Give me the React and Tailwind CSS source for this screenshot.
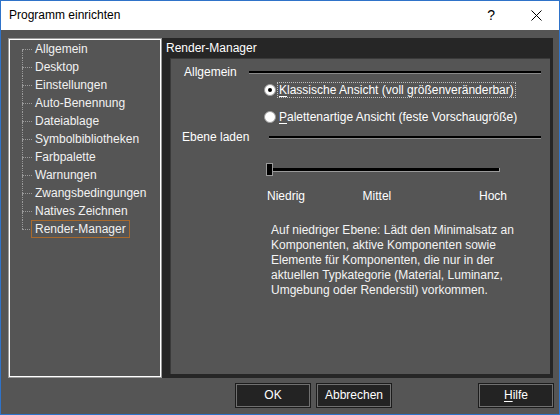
import React from "react";

const items = [
  "Allgemein",
  "Desktop",
  "Einstellungen",
  "Auto-Benennung",
  "Dateiablage",
  "Symbolbibliotheken",
  "Farbpalette",
  "Warnungen",
  "Zwangsbedingungen",
  "Natives Zeichnen",
  "Render-Manager",
];

const dots = "border-dotted border-[#9a9a9a]";

function TreeRow({ label, first, last, selected }) {
  return (
    <div className="flex h-[18px] items-stretch">
      <div className="flex w-[10px] flex-col">
        <div className={first ? "flex-1" : `flex-1 border-l ${dots}`} />
        <div className={`h-px border-t ${dots}`} />
        <div className={last ? "flex-1" : `flex-1 border-l ${dots}`} />
      </div>
      <div className="flex items-center">
        <span
          className={
            selected
              ? "ml-[-1px] flex h-[18px] items-center border border-[#a8692c] px-[3px]"
              : "ml-[2px] px-px"
          }
        >
          {label}
        </span>
      </div>
    </div>
  );
}

function Radio({ checked, accel, rest, focused }) {
  return (
    <div className="flex h-[16px] items-center">
      <span className="flex h-[12px] w-[12px] items-center justify-center rounded-full border border-[#9c9c9c] bg-white">
        {checked && <span className="h-[4px] w-[4px] rounded-full bg-black" />}
      </span>
      <span
        className={
          focused
            ? "ml-px flex h-[16px] items-center border border-dotted border-[#bdbdbd] px-px"
            : "ml-px flex h-[16px] items-center border border-transparent px-px"
        }
      >
        <span className="underline underline-offset-2">{accel}</span>
        {rest}
      </span>
    </div>
  );
}

function Rule() {
  return <div className="h-[3px] flex-1 border-b border-[#8a8a8a] bg-black" />;
}

function Button({ children, className = "" }) {
  return (
    <button
      className={`flex h-[23px] w-[74px] items-center justify-center border border-[#707070] bg-[#232323] text-white shadow-[0_0_0_1px_#1c1c1c] ${className}`}
    >
      {children}
    </button>
  );
}

export default function App() {
  return (
    <div className="flex h-[415px] w-[560px] flex-col border border-[#2f73c9] font-['Liberation_Sans',Arial,sans-serif] text-[12px] leading-[15px]">
      {/* title bar */}
      <div className="flex h-[29px] items-center bg-white pl-2 text-black">
        <span>Programm einrichten</span>
        <span className="ml-auto mr-[36px] text-[14px]">?</span>
        <svg width="11" height="11" viewBox="0 0 11 11" className="mr-[17px]">
          <path d="M0.5 0.5 L10.5 10.5 M10.5 0.5 L0.5 10.5" stroke="#000" strokeWidth="1" />
        </svg>
      </div>

      <div className="flex flex-1 flex-col bg-[#555555] pl-[7px] pr-[6px] pt-[8px] pb-[7px]">
        <div className="flex h-[340px]">
          {/* tree */}
          <div className="w-[154px] border border-[#9a9a9a]">
            <div className="h-full border border-white bg-[#555555] pl-[12px] text-[#f2f2f2]">
              {items.map((it, i) => (
                <TreeRow
                  key={it}
                  label={it}
                  first={i === 0}
                  last={i === items.length - 1}
                  selected={i === items.length - 1}
                />
              ))}
            </div>
          </div>

          {/* page */}
          <div className="flex flex-1 flex-col bg-[#262626] pb-[4px] pl-[8px] pr-[3px]">
            <div className="flex h-[20px] items-center pl-[-4px] text-white">
              <span className="ml-[-4px]">Render-Manager</span>
            </div>
            <div className="flex-1 border-l border-t border-[#3a3a3a] bg-[#555555] pr-[9px] text-white">
              <div className="ml-[13px] mt-[6px] flex h-[15px] items-center gap-[12px]">
                <span>Allgemein</span>
                <Rule />
              </div>
              <div className="ml-[93px] mt-[2px]">
                <Radio checked focused accel="K" rest="lassische Ansicht (voll größenveränderbar)" />
              </div>
              <div className="ml-[93px] mt-[11px]">
                <Radio accel="P" rest="alettenartige Ansicht (feste Vorschaugröße)" />
              </div>
              <div className="ml-[11px] mt-[5px] flex h-[15px] items-center gap-[20px]">
                <span>Ebene laden</span>
                <Rule />
              </div>

              {/* level slider */}
              <div className="relative ml-[95px] mt-[18px] flex h-[13px] w-[234px] items-center">
                <div className="h-[4px] w-full border-b border-r border-[#9a9a9a] bg-black" />
                <div className="absolute left-0 top-0 h-[13px] w-[7px] border border-[#9a9a9a] bg-black" />
              </div>
              <div className="ml-[96px] mt-[13px] flex h-[15px] w-[240px] items-center">
                <span className="w-[96px]">Niedrig</span>
                <span className="w-[117px]">Mittel</span>
                <span>Hoch</span>
              </div>

              <p className="ml-[100px] mt-[19px] text-[#f4f4f4]">
                Auf niedriger Ebene: Lädt den Minimalsatz an
                <br />
                Komponenten, aktive Komponenten sowie
                <br />
                Elemente für Komponenten, die nur in der
                <br />
                aktuellen Typkategorie (Material, Luminanz,
                <br />
                Umgebung oder Renderstil) vorkommen.
              </p>
            </div>
          </div>
        </div>

        {/* buttons */}
        <div className="mt-[6px] flex h-[23px] items-center">
          <Button className="ml-[228px] w-[73px]">OK</Button>
          <Button className="ml-[7px]">Abbrechen</Button>
          <Button className="ml-auto">
            <span className="underline underline-offset-2">H</span>ilfe
          </Button>
        </div>
      </div>
    </div>
  );
}
